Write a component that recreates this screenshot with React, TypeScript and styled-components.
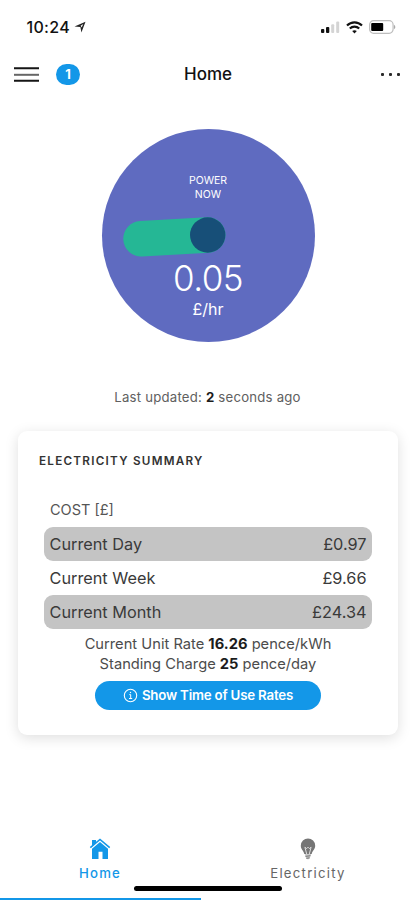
import React from 'react';
import styled, { createGlobalStyle } from 'styled-components';

const BLUE = '#1397e8';

const GlobalStyle = createGlobalStyle`
  * { box-sizing: border-box; }
  body { margin: 0; background: #fff; }
`;

const Screen = styled.div`
  width: 415px;
  height: 900px;
  overflow: hidden;
  display: flex;
  flex-direction: column;
  background: #fff;
  color: #3a3a3a;
  font-family: Inter, 'Liberation Sans', sans-serif;
`;

const StatusBar = styled.header`
  height: 54px;
  flex: none;
  display: flex;
  align-items: center;
  justify-content: space-between;
  padding: 0 19px 0 26.5px;
`;

const Clock = styled.div`
  display: flex;
  align-items: center;
  gap: 4px;
  font-size: 16px;
  font-weight: 500;
  letter-spacing: 0.3px;
  color: #111;
`;

const StatusIcons = styled.div`
  display: flex;
  align-items: center;
  gap: 6px;
`;

const NavBar = styled.nav`
  height: 40px;
  flex: none;
  display: grid;
  grid-template-columns: 1fr auto 1fr;
  align-items: center;
  padding: 0 14px;
`;

const NavLeft = styled.div`
  display: flex;
  align-items: center;
  gap: 17px;
`;

const Badge = styled.span`
  width: 24px;
  height: 21px;
  border-radius: 11px;
  background: ${BLUE};
  color: #fff;
  font-size: 13px;
  font-weight: 700;
  line-height: 21px;
  text-align: center;
`;

const Title = styled.h1`
  margin: 0 0 0 1px;
  font-size: 17px;
  font-weight: 500;
  letter-spacing: 0;
  color: #111;
`;

const MoreButton = styled.div`
  justify-self: end;
  display: flex;
  gap: 5px;
  margin-right: 1px;
`;

const Dot = styled.i`
  width: 3px;
  height: 3px;
  border-radius: 1px;
  background: #2a2a2a;
`;

const Gauge = styled.section`
  width: 213px;
  height: 213px;
  flex: none;
  margin: 34.5px 0 0 101.5px;
  border-radius: 50%;
  background: #5f6bc0;
  color: #fff;
  display: flex;
  flex-direction: column;
  align-items: center;
`;

const GaugeLabel = styled.div`
  margin-top: 45.5px;
  font-size: 10.5px;
  line-height: 13.5px;
  text-align: center;
`;

const Needle = styled.svg`
  display: block;
  flex: none;
  margin-top: 12px;
`;

const GaugeValue = styled.div`
  margin-top: -2px;
  font-size: 35px;
  line-height: 42px;
  font-weight: 300;
  letter-spacing: -0.5px;
`;

const GaugeUnit = styled.div`
  font-size: 16px;
  line-height: 20px;
`;

const Updated = styled.p`
  flex: none;
  margin: 45px 0 0;
  font-size: 13.2px;
  line-height: 20px;
  letter-spacing: 0.21px;
  text-align: center;
  color: #606060;
`;

const Strong = styled.strong`
  font-weight: 700;
  color: #1c1c1c;
`;

const Card = styled.section`
  flex: none;
  width: 380px;
  height: 304px;
  margin: 24.5px 0 0 18px;
  padding: 20px 26px 0;
  border-radius: 9px;
  background: #fff;
  box-shadow: 0 3px 14px rgba(0, 0, 0, 0.13);
`;

const CardTitle = styled.h2`
  margin: 0 0 0 -5px;
  font-size: 11.7px;
  line-height: 20px;
  font-weight: 600;
  letter-spacing: 1.25px;
  color: #333;
`;

const TableLabel = styled.div`
  margin: 28px 0 5.5px 6px;
  font-size: 14.5px;
  line-height: 22px;
  color: #555;
`;

const Row = styled.div<{ $shaded?: boolean }>`
  height: 34px;
  padding: 0 5.5px;
  border-radius: 9px;
  background: ${(p) => (p.$shaded ? '#c4c4c4' : 'transparent')};
  display: flex;
  align-items: center;
  justify-content: space-between;
  font-size: 16.3px;
`;

const Rates = styled.div`
  margin-top: 5px;
  font-size: 14.7px;
  line-height: 20px;
  text-align: center;
  color: #4c4c4c;
`;

const RatesButton = styled.button`
  width: 226px;
  height: 29px;
  margin: 7.5px auto 0 51px;
  padding: 0 0 1px;
  border: 0;
  border-radius: 15px;
  background: ${BLUE};
  color: #fff;
  display: flex;
  align-items: center;
  justify-content: center;
  gap: 4px;
  font-family: inherit;
  font-size: 13.3px;
  font-weight: 600;
  letter-spacing: -0.2px;
`;

const TabBar = styled.footer`
  flex: none;
  margin-top: 101px;
  display: grid;
  grid-template-columns: 200px 216px;
`;

const Tab = styled.div<{ $active?: boolean }>`
  height: 50px;
  display: flex;
  flex-direction: column;
  align-items: center;
  color: ${(p) => (p.$active ? BLUE : '#666')};
  font-size: 13.2px;
  line-height: 18px;
  font-weight: ${(p) => (p.$active ? 500 : 400)};
  letter-spacing: 1.25px;

  svg {
    display: block;
    margin: 2px 0 4px;
  }
`;

const HomeIndicator = styled.div`
  flex: none;
  width: 148px;
  height: 5px;
  margin: 0 0 0 134px;
  border-radius: 3px;
  background: #000;
`;

const TabUnderline = styled.div`
  flex: none;
  width: 201px;
  height: 2px;
  margin-top: 7px;
  background: ${BLUE};
`;

const costs = [
  { label: 'Current Day', value: '£0.97', shaded: true },
  { label: 'Current Week', value: '£9.66', shaded: false },
  { label: 'Current Month', value: '£24.34', shaded: true },
];

const LocationIcon = () => (
  <svg width="12" height="12" viewBox="0 0 12 12">
    <path d="M.5 5.4 11.5.7 7.4 11.4 6.4 6.1Z" fill="#222" />
    <path d="m6.6 4.8 2.7-1.7-1.6 3.3Z" fill="#fff" />
  </svg>
);

const SignalIcon = () => (
  <svg width="19" height="12" viewBox="0 0 19 12">
    <rect x="0" y="8" width="3.3" height="4" rx="1" fill="#111" />
    <rect x="5" y="6" width="3.3" height="6" rx="1" fill="#111" />
    <rect x="10.2" y="3.2" width="3" height="8.8" rx="1" fill="#d4d4d4" />
    <rect x="15.2" y="0.5" width="3" height="11.5" rx="1" fill="#d4d4d4" />
  </svg>
);

const WifiIcon = () => (
  <svg width="17" height="13" viewBox="0 0 17 13" fill="none" stroke="#111" strokeWidth="2.1">
    <path d="M1 4.6C5.2.3 11.8.3 16 4.6" />
    <path d="M3.8 7.6c2.7-2.7 6.7-2.7 9.4 0" />
    <path d="m8.5 12.6-2.3-2.5c1.3-1.3 3.3-1.3 4.6 0Z" fill="#111" stroke="none" />
  </svg>
);

const BatteryIcon = () => (
  <svg width="27" height="14" viewBox="0 0 27 14">
    <rect x=".6" y=".7" width="23.5" height="12.6" rx="4" fill="none" stroke="#bdbdbd" strokeWidth="1.2" />
    <rect x="2.2" y="3" width="12" height="8" rx="1" fill="#000" />
    <path d="M25 4.8c1.8.8 1.8 3.6 0 4.4Z" fill="#aaa" />
  </svg>
);

const MenuIcon = () => (
  <svg width="25" height="15" viewBox="0 0 25 15">
    <path d="M0 1.3h25M0 13.7h25" stroke="#151515" strokeWidth="2" />
    <path d="M0 7.8h25" stroke="#666" strokeWidth="2" />
  </svg>
);

const InfoIcon = () => (
  <svg width="15" height="15" viewBox="0 0 15 15" fill="none" stroke="#fff">
    <circle cx="7.5" cy="7.5" r="6.2" strokeWidth="1.1" />
    <path d="M6.3 6.6h1.4v3.8M6 10.5h3.2" strokeWidth="1" />
    <circle cx="7.5" cy="4.5" r=".7" fill="#fff" stroke="none" />
  </svg>
);

const HouseIcon = () => (
  <svg width="22" height="22" viewBox="0 0 22 22">
    <path d="M1.3 9.7 11 1.5l9.7 8.2" fill="none" stroke={BLUE} strokeWidth="1.6" />
    <path d="M3 2h4v3.2L3 8.6Z" fill={BLUE} />
    <path d="m11 4 8 6.8V21h-5.5v-7.2h-4V21H3V10.8Z" fill={BLUE} />
  </svg>
);

const BulbIcon = () => (
  <svg width="16" height="22" viewBox="0 0 16 22">
    <path d="M8 .5a7.2 7.2 0 0 0-7.2 7.2c0 3.5 2.8 4.8 3.5 8.3h7.4c.7-3.5 3.5-4.8 3.5-8.3A7.2 7.2 0 0 0 8 .5Z" fill="#757575" />
    <path d="M6.7 16 4.9 9.2l1.7 1.4L8 9.2l1.4 1.4 1.7-1.4L9.3 16" fill="none" stroke="#ddd" />
    <path d="M4.8 16.3h6.4l-1.5 4-1.7 1.2-1.7-1.2Z" fill="#b9b9b9" />
    <path d="m5.4 18.6 5-1M6.4 20.5l3-.7" stroke="#777" strokeWidth=".8" />
  </svg>
);

export default function App() {
  return (
    <>
      <GlobalStyle />
      <Screen>
        <StatusBar>
          <Clock>10:24<LocationIcon /></Clock>
          <StatusIcons><SignalIcon /><WifiIcon /><BatteryIcon /></StatusIcons>
        </StatusBar>
        <NavBar>
          <NavLeft><MenuIcon /><Badge>1</Badge></NavLeft>
          <Title>Home</Title>
          <MoreButton><Dot /><Dot /><Dot /></MoreButton>
        </NavBar>
        <Gauge>
          <GaugeLabel>POWER<br />NOW</GaugeLabel>
          <Needle width="172" height="46" viewBox="0 0 172 46">
            <path d="M19 25.8 85.7 22" stroke="#25b795" strokeWidth="35.5" strokeLinecap="round" />
            <circle cx="85.7" cy="22" r="17.7" fill="#174f78" />
          </Needle>
          <GaugeValue>0.05</GaugeValue>
          <GaugeUnit>£/hr</GaugeUnit>
        </Gauge>
        <Updated>Last updated: <Strong>2</Strong> seconds ago</Updated>
        <Card>
          <CardTitle>ELECTRICITY SUMMARY</CardTitle>
          <TableLabel>COST [£]</TableLabel>
          {costs.map((c) => (
            <Row key={c.label} $shaded={c.shaded}>
              <span>{c.label}</span><span>{c.value}</span>
            </Row>
          ))}
          <Rates>
            <div>Current Unit Rate <Strong>16.26</Strong> pence/kWh</div>
            <div>Standing Charge <Strong>25</Strong> pence/day</div>
          </Rates>
          <RatesButton><InfoIcon />Show Time of Use Rates</RatesButton>
        </Card>
        <TabBar>
          <Tab $active><HouseIcon />Home</Tab>
          <Tab><BulbIcon />Electricity</Tab>
        </TabBar>
        <HomeIndicator />
        <TabUnderline />
      </Screen>
    </>
  );
}
